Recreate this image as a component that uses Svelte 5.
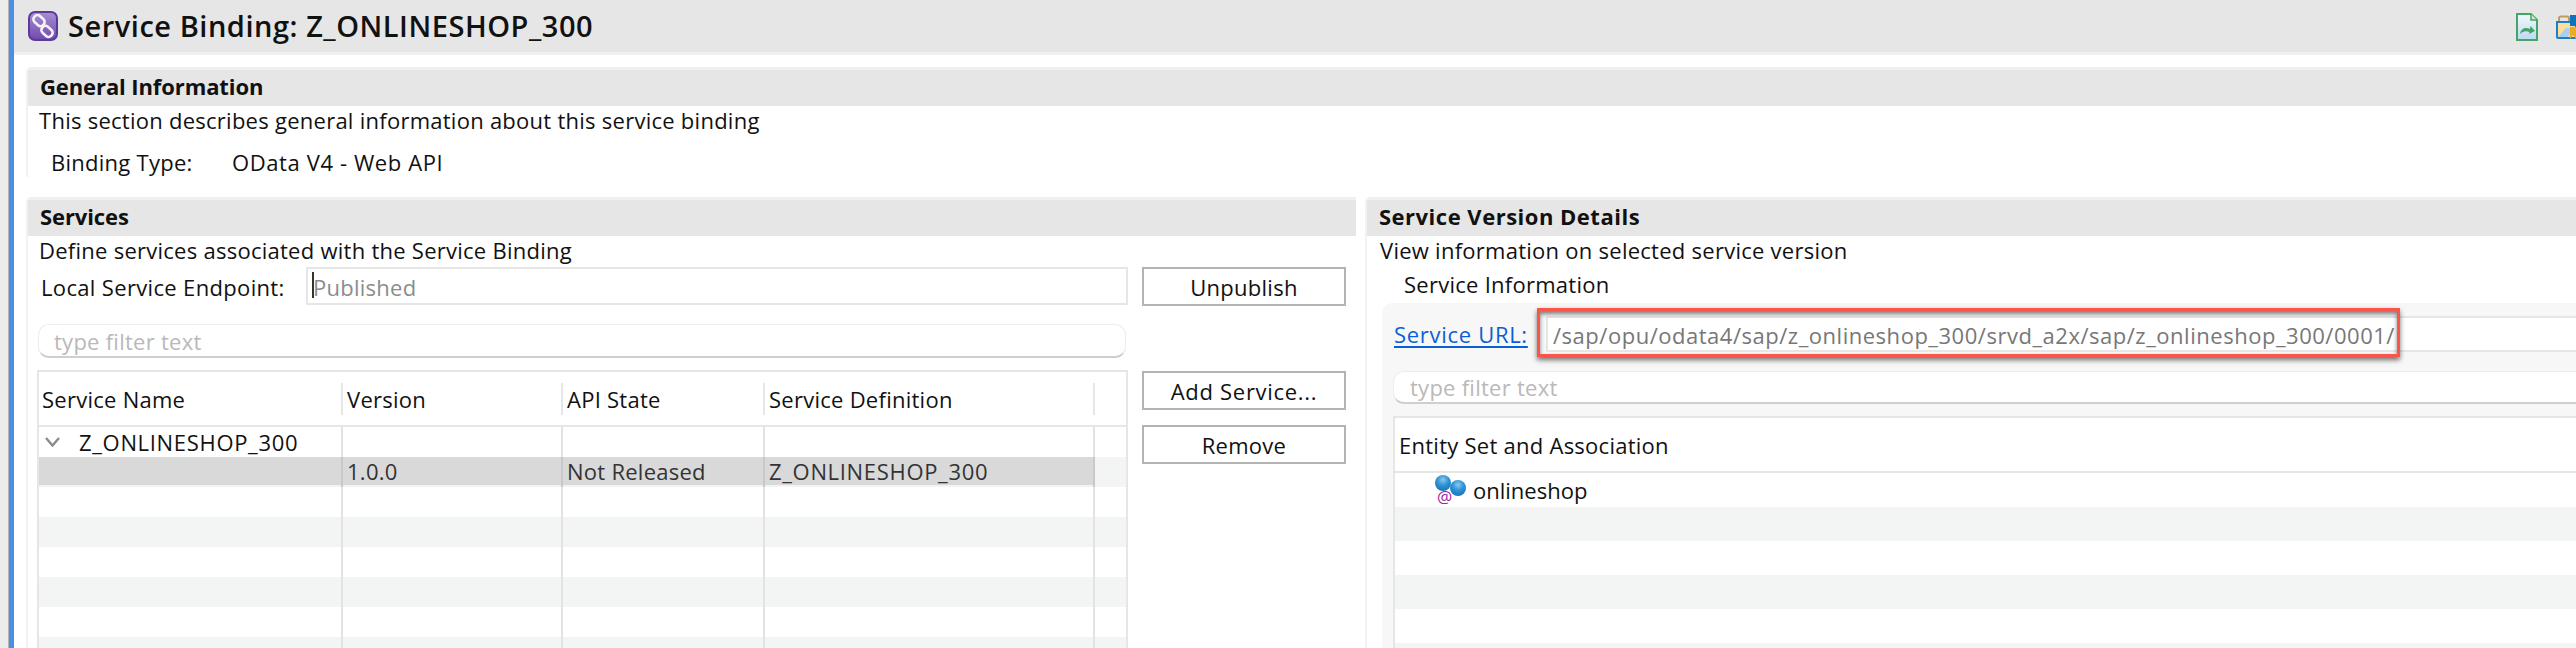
<script>
  const svcCols = ['Service Name', 'Version', 'API State', 'Service Definition', ''];
  const blanks = [0, 1, 2, 3, 4, 5];
  const entityRows = [0, 1, 2, 3, 4];
</script>

<div class="page">
  <div class="strip"></div>
  <div class="blue"></div>
  <main class="main">
    <header class="titlebar">
      <svg class="binding-icon" viewBox="0 0 30 30" aria-hidden="true">
        <defs>
          <linearGradient id="pg" x1="0" y1="0" x2="0" y2="1">
            <stop offset="0" stop-color="#a98fd2" />
            <stop offset="1" stop-color="#6f49ad" />
          </linearGradient>
        </defs>
        <rect x="1" y="1" width="28" height="28" rx="6" fill="url(#pg)" stroke="#5c3a99" stroke-width="2" />
        <g fill="none" stroke="#f4f0fa" stroke-width="2.6">
          <rect x="5" y="5.6" width="12" height="8" rx="3.6" transform="rotate(42 11 9.6)" />
          <rect x="13" y="16.4" width="12" height="8" rx="3.6" transform="rotate(42 19 20.4)" />
        </g>
      </svg>
      <h1>Service Binding: Z_ONLINESHOP_300</h1>
      <div class="tools">
        <svg class="doc-icon" viewBox="0 0 22 28" aria-hidden="true">
          <defs>
            <linearGradient id="dg" x1="0" y1="0" x2="0" y2="1">
              <stop offset="0" stop-color="#f4f8fc" />
              <stop offset="1" stop-color="#bcd9f2" />
            </linearGradient>
          </defs>
          <path d="M1 1H15L21 7V27H1Z" fill="url(#dg)" stroke="#45a468" stroke-width="2" />
          <path d="M15 1V7H21" fill="#cfe6d6" stroke="#45a468" stroke-width="1.5" />
          <path d="M4 21C5 15 10 14 14 16L14.500 13L19 18L13 21L13.500 19C10 17.500 7 18 4 21Z" fill="#45a468" />
        </svg>
        <svg class="folder-icon" viewBox="0 0 20 24" aria-hidden="true">
          <path d="M3 7V3.500Q3 1.500 5 1.500H11Q13 1.500 13 3.500V7" fill="none" stroke="#c09a63" stroke-width="2" />
          <path d="M1 7H20V23H2Q1 23 1 22Z" fill="#fbdf9a" stroke="#1f7fc4" stroke-width="2" />
          <path d="M2 22L10 13H17L12 22Z" fill="#a8d0f0" />
          <rect x="14" y="0" width="6" height="11" fill="#0f72bd" />
          <path d="M14 12H20V24L17 20L14 24Z" fill="#eeaa25" />
        </svg>
      </div>
    </header>
    <div class="rule"></div>

    <div class="content">
      <section class="card general">
        <h2>General Information</h2>
        <p class="desc">This section describes general information about this service binding</p>
        <div class="binding-row">
          <span class="binding-label">Binding Type:</span>
          <span class="binding-value">OData V4 - Web API</span>
        </div>
      </section>

      <div class="columns">
        <section class="card services">
          <h2>Services</h2>
          <p class="desc">Define services associated with the Service Binding</p>
          <div class="services-body">
            <div class="services-left">
              <div class="endpoint">
                <span class="endpoint-label">Local Service Endpoint:</span>
                <div class="field endpoint-field"><i class="caret"></i>Published</div>
              </div>
              <div class="filter">type filter text</div>
              <div class="table">
                <div class="row head">
                  {#each svcCols as c}
                    <div class="hcell"><span>{c}</span></div>
                  {/each}
                </div>
                <div class="row r1">
                  <div class="cell first">
                    <svg class="chev" viewBox="0 0 15 10" aria-hidden="true">
                      <path d="M1 1L7.500 8.500L14 1" fill="none" stroke="#8a8a8a" stroke-width="2.400" />
                    </svg>
                    <span class="name">Z_ONLINESHOP_300</span>
                  </div>
                  <div class="cell"></div><div class="cell"></div><div class="cell"></div><div class="cell"></div>
                </div>
                <div class="row selected">
                  <div class="cell first"></div>
                  <div class="cell">1.0.0</div>
                  <div class="cell">Not Released</div>
                  <div class="cell"><span class="name">Z_ONLINESHOP_300</span></div>
                  <div class="cell rest"></div>
                </div>
                {#each blanks as b}
                  <div class="row blank" class:alt={b % 2 === 1}>
                    <div class="cell first"></div><div class="cell"></div><div class="cell"></div><div class="cell"></div><div class="cell"></div>
                  </div>
                {/each}
              </div>
            </div>
            <div class="buttons">
              <button>Unpublish</button>
              <button class="add">Add Service...</button>
              <button class="remove">Remove</button>
            </div>
          </div>
        </section>

        <section class="card details">
          <h2>Service Version Details</h2>
          <p class="desc">View information on selected service version</p>
          <div class="info-title">Service Information</div>
          <div class="panel">
            <div class="url-row">
              <a href="#top" class="url-link">Service URL:</a>
              <div class="url-field">
                /sap/opu/odata4/sap/z_onlineshop_300/srvd_a2x/sap/z_onlineshop_300/0001/
                <div class="annotation"></div>
              </div>
            </div>
            <div class="filter filter-right">type filter text</div>
            <div class="table entity">
              <div class="entity-head">Entity Set and Association</div>
              <div class="entity-row">
                <span class="entity-icon" aria-hidden="true">
                  <svg viewBox="0 0 32 24">
                    <defs>
                      <radialGradient id="bg" cx="0.5" cy="0.3" r="0.7">
                        <stop offset="0" stop-color="#8cc8ee" />
                        <stop offset="0.5" stop-color="#2f93d6" />
                        <stop offset="1" stop-color="#1c74b8" />
                      </radialGradient>
                    </defs>
                    <circle cx="8" cy="8" r="8" fill="url(#bg)" />
                    <circle cx="23" cy="13" r="8" fill="url(#bg)" />
                  </svg>
                  <b class="at">@</b>
                </span>
                <span class="entity-name">onlineshop</span>
              </div>
              {#each entityRows as e}
                <div class="entity-blank" class:alt={e % 2 === 0}></div>
              {/each}
            </div>
          </div>
        </section>
      </div>
    </div>
  </main>
</div>

<style>
  :global(body) {
    margin: 0;
    background: #fff;
  }
  .page {
    display: flex;
    width: 2576px;
    height: 648px;
    overflow: hidden;
    font-family: "Open Sans", "Noto Sans", sans-serif;
    font-size: 22px;
    letter-spacing: 0.26px;
    color: #111;
    background: #fff;
  }
  .strip {
    width: 8px;
    flex: none;
    background: #ececec;
    border-right: 1px solid #b5b5b5;
  }
  .blue {
    width: 5px;
    flex: none;
    background: #4a90e2;
  }
  .main {
    flex: 1;
    min-width: 0;
  }
  .titlebar {
    height: 52px;
    display: flex;
    align-items: center;
    padding-left: 14px;
    background: #e6e6e6;
  }
  .binding-icon {
    width: 30px;
    height: 30px;
    flex: none;
    margin-top: -1px;
  }
  h1 {
    margin: -2px 0 0 10px;
    font-size: 29px;
    font-weight: 600;
    letter-spacing: 0.53px;
    white-space: nowrap;
  }
  .tools {
    margin-left: auto;
    display: flex;
    gap: 18px;
    align-items: center;
    margin-top: 2px;
  }
  .doc-icon {
    width: 22px;
    height: 28px;
  }
  .folder-icon {
    width: 20px;
    height: 24px;
  }
  .rule {
    height: 3px;
    background: #f0f0f0;
  }
  .content {
    padding: 12px 0 0 12px;
  }
  .card {
    border-top: 3px solid #f0f0f0;
    border-left: 2px solid #f2f2f2;
    border-top-left-radius: 5px;
  }
  h2 {
    margin: 0;
    height: 36px;
    line-height: 32px;
    padding-left: 12px;
    font-size: 22px;
    font-weight: 700;
    letter-spacing: -0.1px;
    background: #e6e6e6;
  }
  .details h2 {
    letter-spacing: 0.5px;
  }
  .desc {
    margin: 0;
    height: 28px;
    line-height: 28px;
    padding-left: 11px;
  }
  .binding-row {
    display: flex;
    height: 28px;
    line-height: 26px;
    margin-top: 15px;
    padding-left: 23px;
  }
  .binding-label {
    width: 181px;
  }
  .binding-value {
    letter-spacing: 0.6px;
  }
  .columns {
    display: grid;
    grid-template-columns: 1330px 1fr;
    column-gap: 9px;
    margin-top: 20px;
  }
  .services-body {
    display: flex;
    gap: 14px;
    margin: 3px 0 0 9px;
  }
  .services-left {
    width: 1091px;
    flex: none;
  }
  .endpoint {
    display: flex;
    align-items: center;
    height: 38px;
  }
  .endpoint-label {
    width: 265px;
    padding: 2px 0 0 4px;
    flex: none;
    letter-spacing: 0.34px;
  }
  .field {
    flex: 1;
    height: 38px;
    box-sizing: border-box;
    border: 2px solid #e6e6e6;
    line-height: 36px;
    padding-left: 5px;
    color: #8c8c8c;
    position: relative;
  }
  .caret {
    position: absolute;
    left: 4px;
    top: 3px;
    width: 2px;
    height: 26px;
    background: #333;
  }
  .filter {
    height: 34px;
    box-sizing: border-box;
    margin: 19px 2px 0 1px;
    border: 1px solid #ededed;
    border-bottom: 2px solid #cfcfcf;
    border-radius: 11px;
    line-height: 33px;
    padding-left: 15px;
    color: #b9b9b9;
  }
  .table {
    margin-top: 12px;
    border: 2px solid #e6e6e6;
    border-bottom: 0;
  }
  .row {
    display: grid;
    grid-template-columns: 302px 220px 202px 330px 1fr;
    height: 30px;
    box-sizing: border-box;
  }
  .row.head {
    height: 55px;
    border-bottom: 2px solid #e6e6e6;
  }
  .hcell {
    display: flex;
    align-items: center;
  }
  .hcell span {
    display: block;
    height: 32px;
    line-height: 32px;
    padding-left: 4px;
    border-left: 2px solid #e6e6e6;
    white-space: nowrap;
    flex: 1;
  }
  .hcell:first-child span {
    border-left: 0;
    padding-left: 3px;
  }
  .cell {
    border-left: 2px solid #e3e3e3;
    padding-left: 4px;
    line-height: 30px;
    white-space: nowrap;
  }
  .cell.first {
    border-left: 0;
    padding-left: 6px;
    display: flex;
    align-items: center;
  }
  .name {
    letter-spacing: 0.68px;
  }
  .chev {
    width: 15px;
    height: 10px;
    margin-right: 19px;
  }
  .row.selected {
    height: 30px;
    background: #d9d9d9;
    border-bottom: 2px solid #f2f3f3;
    color: #333;
  }
  .row.selected .cell {
    border-left-color: #c9c9c9;
    line-height: 28px;
  }
  .row.selected .cell.first {
    border-left: 0;
  }
  .row.selected .cell.rest {
    background: #f3f4f4;
    height: 30px;
  }
  .row.blank.alt {
    background: #f3f4f4;
  }
  .buttons {
    display: flex;
    flex-direction: column;
    width: 204px;
    flex: none;
  }
  button {
    height: 39px;
    box-sizing: border-box;
    background: #fff;
    border: 2px solid #b3b3b3;
    font: inherit;
    letter-spacing: 0.26px;
    color: #111;
    padding: 0;
  }
  .add {
    margin-top: 65px;
    letter-spacing: 0.7px;
  }
  .remove {
    margin-top: 15px;
  }
  .details .desc {
    padding-left: 13px;
  }
  .info-title {
    height: 28px;
    line-height: 28px;
    margin: 6px 0 0 37px;
  }
  .panel {
    margin: 5px 0 0 15px;
    padding: 13px 0 0 11px;
    background: #f7f7f7;
    border-top-left-radius: 10px;
    height: 400px;
  }
  .url-row {
    display: flex;
    align-items: center;
    height: 36px;
  }
  .url-link {
    width: 152px;
    flex: none;
    padding-left: 1px;
    color: #0a5fd6;
    letter-spacing: 0.7px;
    text-decoration: underline;
    text-underline-offset: 3px;
  }
  .url-field {
    flex: 1;
    height: 36px;
    box-sizing: border-box;
    border: 2px solid #e6e6e6;
    border-right: 0;
    background: #fff;
    line-height: 34px;
    padding-left: 5px;
    color: #777;
    letter-spacing: 0.52px;
    position: relative;
    white-space: nowrap;
  }
  .annotation {
    position: absolute;
    left: -11px;
    top: -10px;
    width: 863px;
    height: 49px;
    box-sizing: border-box;
    border: 3px solid #fb5549;
    box-shadow: 0 3px 5px rgba(0, 0, 0, 0.55), inset 0 3px 4px rgba(0, 0, 0, 0.5);
    pointer-events: none;
  }
  .filter-right {
    margin: 19px 0 0 0;
    height: 33px;
    line-height: 31px;
    background: #fff;
    border-right: 0;
    border-radius: 11px 0 0 11px;
    padding-left: 16px;
  }
  .entity {
    background: #fff;
    border-right: 0;
    margin-top: 12px;
  }
  .entity-head {
    height: 53px;
    line-height: 54px;
    padding-left: 4px;
    border-bottom: 2px solid #e6e6e6;
  }
  .entity-row {
    height: 34px;
    display: flex;
    align-items: center;
    white-space: nowrap;
  }
  .entity-name {
    letter-spacing: 0;
  }
  .entity-icon {
    position: relative;
    width: 32px;
    height: 24px;
    margin: -6px 6px 0 40px;
    display: block;
  }
  .entity-icon svg {
    display: block;
    width: 32px;
    height: 24px;
  }
  .at {
    position: absolute;
    left: 2px;
    top: 14px;
    font-size: 17px;
    line-height: 16px;
    font-weight: 400;
    color: #a0279c;
  }
  .entity-blank {
    height: 34px;
  }
  .entity-blank.alt {
    background: #f3f4f4;
  }
</style>
